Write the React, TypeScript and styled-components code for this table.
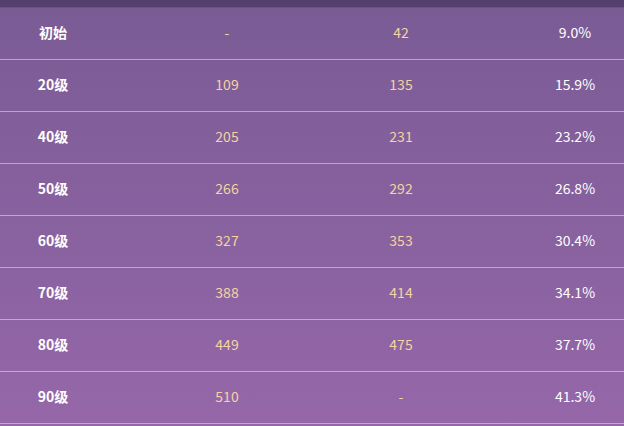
import React from "react";
import styled, { createGlobalStyle } from "styled-components";

const Global = createGlobalStyle`
  html, body { margin: 0; padding: 0; overflow: hidden; }
  body {
    width: 624px;
    height: 426px;
    background: linear-gradient(180deg, #7a5b94 0%, #9567a9 100%);
    font-family: "Noto Sans CJK SC", "Noto Sans", sans-serif;
  }
`;

const Page = styled.div`
  width: 624px;
  height: 426px;
  overflow: hidden;
  background: linear-gradient(180deg, #7a5b94 0%, #9567a9 100%);
`;

const Table = styled.div`
  width: 696px;
  margin-left: -34px;
  display: flex;
  flex-direction: column;
`;

const HeaderStub = styled.div`
  height: 7px;
  background: #553f6c;
  border-bottom: 1px solid #6b5186;
`;

const Row = styled.div`
  display: grid;
  grid-template-columns: repeat(4, 174px);
  align-items: center;
  height: 47px;
  padding-bottom: 4px;
  border-bottom: 1px solid rgba(230, 210, 240, 0.6);
`;

const Cell = styled.div<{ $kind: "level" | "num" | "pct" }>`
  text-align: center;
  font-size: 14px;
  line-height: 20px;
  font-weight: ${(p) => (p.$kind === "level" ? 700 : 400)};
  color: ${(p) => (p.$kind === "num" ? "#f3d4a2" : "#ffffff")};
`;

const rows = [
  ["初始", "-", "42", "9.0%"],
  ["20级", "109", "135", "15.9%"],
  ["40级", "205", "231", "23.2%"],
  ["50级", "266", "292", "26.8%"],
  ["60级", "327", "353", "30.4%"],
  ["70级", "388", "414", "34.1%"],
  ["80级", "449", "475", "37.7%"],
  ["90级", "510", "-", "41.3%"],
];

export default function App() {
  return (
    <Page>
      <Global />
      <Table>
        <HeaderStub />
        {rows.map((r) => (
          <Row key={r[0]}>
            <Cell $kind="level">{r[0]}</Cell>
            <Cell $kind="num">{r[1]}</Cell>
            <Cell $kind="num">{r[2]}</Cell>
            <Cell $kind="pct">{r[3]}</Cell>
          </Row>
        ))}
      </Table>
    </Page>
  );
}
